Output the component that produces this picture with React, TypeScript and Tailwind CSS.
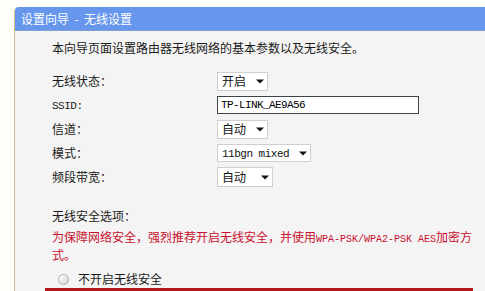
import type { ReactNode } from 'react';

const cjk = "font-['Noto_Sans_CJK_SC','Noto_Sans',sans-serif]";
const mono = "font-['Liberation_Mono','Noto_Sans_CJK_SC',monospace]";

function Caret() {
  return (
    <svg width="8" height="5" viewBox="0 0 8 5" className="shrink-0">
      <path d="M0 0.5 H8 L4 4.5 Z" fill="#111" />
    </svg>
  );
}

function Select({ children, width, height = 'h-[19px]' }: { children: ReactNode; width: string; height?: string }) {
  return (
    <div
      className={`${width} ${height} flex items-center justify-between border border-[#cfcfcf] bg-white pl-[4px] pr-[3px] text-[12px] leading-none text-[#111]`}
    >
      <span>{children}</span>
      <Caret />
    </div>
  );
}

function Row({ label, children }: { label: ReactNode; children: ReactNode }) {
  return (
    <div className="flex h-[24px] items-center">
      <div className="w-[165px] text-[12px] text-[#1a1a1a]">{label}</div>
      {children}
    </div>
  );
}

export default function App() {
  return (
    <div className={`h-[291px] w-[485px] overflow-hidden bg-[#fefefa] pl-[14px] pt-[7px] ${cjk}`}>
      <div className="rounded-tl-[5px] border-l border-[#d6b98c]">
        <div className="flex h-[24px] items-center rounded-tl-[4px] border-b border-[#7f9fcc] bg-[#6797ec] pl-[6px] text-[12px] text-white">
          设置向导&nbsp;&nbsp;-&nbsp;&nbsp;无线设置
        </div>

        <div className="h-[300px] bg-[#f4f4f4] pl-[37px] pt-[8px]">
          <p className="text-[12px] leading-[18px] text-[#1a1a1a]">本向导页面设置路由器无线网络的基本参数以及无线安全。</p>

          <div className="mt-[12px]">
            <Row label="无线状态：">
              <Select width="w-[51px]">开启</Select>
            </Row>
            <Row label={<span className={`${mono} text-[11px] tracking-[-0.5px]`}>SSID:</span>}>
              <div
                className={`flex h-[18px] w-[202px] items-center border border-[#3c434b] bg-white pl-[3px] text-[11px] tracking-[-0.6px] text-[#000] ${mono}`}
              >
                TP-LINK_AE9A56
              </div>
            </Row>
            <Row label="信道：">
              <Select width="w-[51px]">自动</Select>
            </Row>
            <Row label="模式：">
              <Select width="w-[94px]" height="h-[18px]">
                <span className={`${mono} text-[11px] tracking-[-0.5px]`}>11bgn mixed</span>
              </Select>
            </Row>
            <Row label="频段带宽：">
              <Select width="w-[56px]" height="h-[20px]">
                <span className="pr-[10px]">自动</span>
              </Select>
            </Row>
          </div>

          <p className="mt-[18px] text-[12px] leading-[18px] text-[#1a1a1a]">无线安全选项：</p>
          <p className="mt-[4px] w-[430px] text-[12px] leading-[15px] text-[#c8102e]">
            为保障网络安全，强烈推荐开启无线安全，并使用
            <span className={`${mono} text-[10px]`}>WPA-PSK/WPA2-PSK AES</span>
            加密方
            <br />
            式。
          </p>

          <div className="mt-[8px] flex h-[18px] items-center text-[12px] text-[#1a1a1a]">
            <span className="ml-[6px] mr-[9px] h-[11px] w-[11px] rounded-full border border-[#a9a9a9] bg-gradient-to-br from-white to-[#d8d8d8]" />
            不开启无线安全
          </div>

          <div className="-ml-[7px] h-[30px] w-[428px] border-[3px] border-[#b3161c] bg-[#f7f7f7]" />
        </div>
      </div>
    </div>
  );
}
